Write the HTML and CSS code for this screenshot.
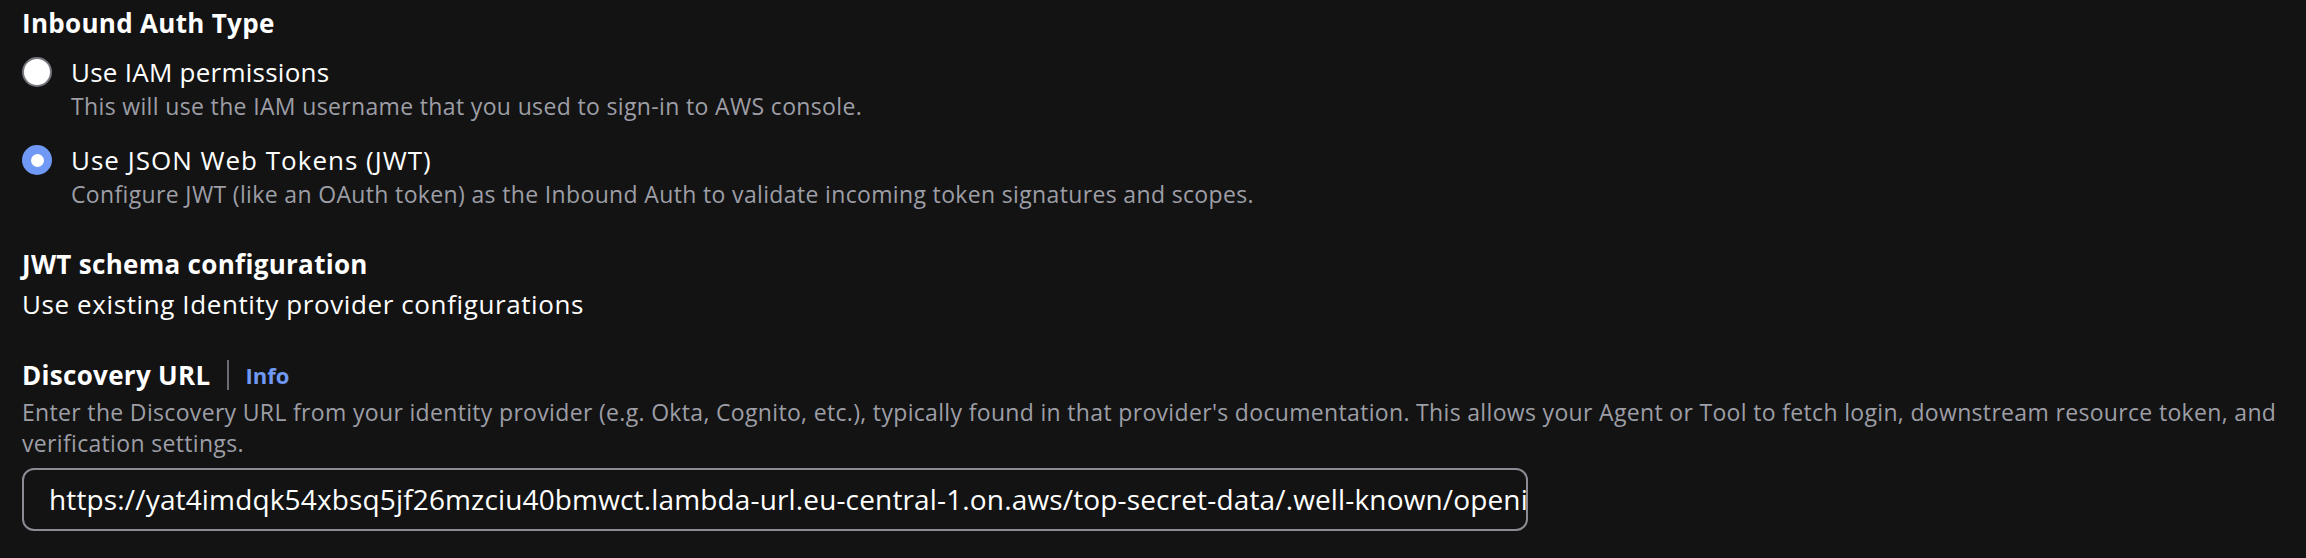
FILE: index.html
```html
<!DOCTYPE html>
<html>
<head>
<meta charset="utf-8">
<link rel="stylesheet" href="styles.css">
</head>
<body>
<div class="form">
  <div class="field-label">Inbound Auth Type</div>
  <div class="radio-group">
    <div class="radio-option">
      <span class="radio"></span>
      <div class="radio-text">
        <div class="radio-label">Use IAM permissions</div>
        <div class="radio-desc">This will use the IAM username that you used to sign-in to AWS console.</div>
      </div>
    </div>
    <div class="radio-option">
      <span class="radio checked"></span>
      <div class="radio-text">
        <div class="radio-label caps">Use JSON Web Tokens (JWT)</div>
        <div class="radio-desc">Configure JWT (like an OAuth token) as the Inbound Auth to validate incoming token signatures and scopes.</div>
      </div>
    </div>
  </div>

  <div class="section">
    <div class="field-label">JWT schema configuration</div>
    <div class="plain">Use existing Identity provider configurations</div>
  </div>

  <div class="section url-field">
    <div class="label-row">
      <span class="field-label">Discovery URL</span>
      <span class="divider"></span>
      <a class="info">Info</a>
    </div>
    <div class="field-desc">Enter the Discovery URL from your identity provider (e.g. Okta, Cognito, etc.), typically found in that provider's documentation. This allows your Agent or Tool to fetch login, downstream resource token, and verification settings.</div>
    <div class="input">https://yat4imdqk54xbsq5jf26mzciu40bmwct.lambda-url.eu-central-1.on.aws/top-secret-data/.well-known/openid-configuration</div>
  </div>
</div>
</body>
</html>
```
FILE: styles.css
```css
html, body {
  margin: 0;
  padding: 0;
  background: #131313;
}
body {
  font-family: "Open Sans", "Noto Sans", sans-serif;
  color: #ffffff;
  width: 2306px;
  height: 558px;
  overflow: hidden;
}
.form {
  padding: 5px 0 0 22px;
  display: flex;
  flex-direction: column;
}
.field-label {
  font-size: 26px;
  font-weight: 700;
  letter-spacing: 0.3px;
  line-height: 36px;
}
.radio-group {
  display: flex;
  flex-direction: column;
  gap: 19px;
  margin-top: 13px;
}
.radio-option {
  display: flex;
  gap: 19px;
  align-items: flex-start;
}
.radio {
  flex: none;
  width: 30px;
  height: 30px;
  margin-top: 3px;
  border-radius: 50%;
  box-sizing: border-box;
  background: #ffffff;
  border: 2px solid #77777f;
  position: relative;
}
.radio.checked {
  background: #7099f5;
  border-color: #7099f5;
}
.radio.checked::after {
  content: "";
  position: absolute;
  left: 50%;
  top: 50%;
  width: 13px;
  height: 13px;
  margin: -6.5px 0 0 -6.5px;
  border-radius: 50%;
  background: #ffffff;
}
.radio-label {
  font-size: 26px;
  letter-spacing: 0.25px;
  line-height: 36px;
}
.radio-label.caps {
  letter-spacing: 1px;
}
.radio-desc {
  font-size: 23px;
  letter-spacing: 0.35px;
  line-height: 33px;
  color: #9d9ea6;
}
.section {
  margin-top: 35px;
}
.plain {
  font-size: 26px;
  letter-spacing: 0.6px;
  line-height: 36px;
  margin-top: 4px;
}
.label-row {
  display: flex;
  align-items: center;
}
.divider {
  width: 2px;
  height: 30px;
  background: #6b6b72;
  margin: 0 16px 0 17px;
}
.info {
  font-size: 22px;
  font-weight: 700;
  color: #7099f5;
  line-height: 36px;
}
.field-desc {
  font-size: 23px;
  letter-spacing: 0.33px;
  line-height: 31px;
  color: #9d9ea6;
  margin-top: 4px;
  max-width: 2284px;
}
.input {
  margin-top: 9px;
  width: 1506px;
  height: 63px;
  box-sizing: border-box;
  border: 2px solid #8b8b93;
  border-radius: 12px;
  padding: 0 25px;
  font-size: 28px;
  letter-spacing: 0.15px;
  line-height: 59px;
  white-space: nowrap;
  overflow: hidden;
}
```
